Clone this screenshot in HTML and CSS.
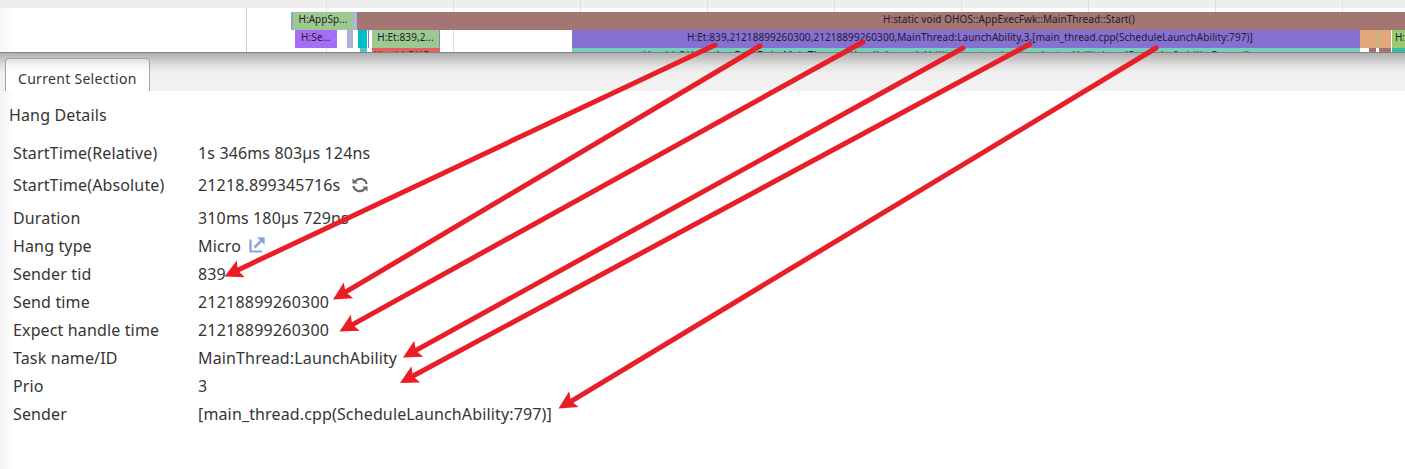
FILE: index.html
```html
<!DOCTYPE html>
<html lang="en">
<head>
<meta charset="utf-8">
<title>Hang Details</title>
<link rel="stylesheet" href="styles.css">
</head>
<body>
<div class="app">
  <div class="ruler"></div>
  <div class="tracks">
    <div class="track-name"></div>
    <div class="lanes">
      <div class="lane">
        <span class="slice s-edge"></span><span class="slice s-app">H:AppSp...</span><span class="slice s-gap"></span><span class="slice s-start">H:static void OHOS::AppExecFwk::MainThread::Start()</span>
      </div>
      <div class="lane">
        <span class="slice s-se">H:Se...</span><span class="slice s-lav"></span><span class="slice s-cyan"></span><span class="slice s-hair"></span><span class="slice s-et">H:Et:839,2...</span><span class="slice s-hair2"></span><span class="slice s-launch">H:Et:839,21218899260300,21218899260300,MainThread:LaunchAbility,3,[main_thread.cpp(ScheduleLaunchAbility:797)]</span><span class="slice s-orange1"></span><span class="slice s-olive"></span><span class="slice s-orange2"></span><span class="slice s-h">H:</span>
      </div>
      <div class="lane">
        <span class="slice s-teal1"></span><span class="slice s-red">H:void OHO...</span><span class="slice s-mint">H:void OHOS::AppExecFwk::MainThread::HandleLaunchAbility(const std::shared_ptr&lt;AbilityLocalRecord&gt; &amp;abilityRecord)</span><span class="slice s-brown1"></span><span class="slice s-brown2"></span><span class="slice s-teal2"></span>
      </div>
    </div>
  </div>
  <div class="panel">
    <div class="tabbar"><div class="tab">Current Selection</div></div>
    <div class="details">
      <div class="heading">Hang Details</div>
      <div class="row tall"><span class="key">StartTime(Relative)</span><span class="value">1s 346ms 803µs 124ns</span></div>
      <div class="row tall"><span class="key">StartTime(Absolute)</span><span class="value">21218.899345716s</span>
        <svg class="sync" width="16" height="16" viewBox="0 0 16 16"><g fill="none" stroke="#666" stroke-width="2.2"><path d="M14.600 7A6.400 6.400 0 0 0 3.300 4.300"/><path d="M1.400 9A6.400 6.400 0 0 0 12.700 11.700"/></g><path d="M.5 1.500V6.600H5.800ZM15.500 14.500V9.400H10.200Z" fill="#666"/></svg></div>
      <div class="row duration"><span class="key">Duration</span><span class="value">310ms 180µs 729ns</span></div>
      <div class="row"><span class="key">Hang type</span><span class="value">Micro</span>
        <svg class="jump" width="16" height="16" viewBox="0 0 16 16"><g fill="none" stroke="#86a5e0" stroke-width="2.2"><path d="M1.500 2.500V14.500H13"/><path d="M5.500 10.500L12.500 3.500" stroke-width="2.600"/></g><path d="M8 .3H15.700V8Z" fill="#86a5e0"/></svg></div>
      <div class="row"><span class="key">Sender tid</span><span class="value">839</span></div>
      <div class="row"><span class="key">Send time</span><span class="value number">21218899260300</span></div>
      <div class="row"><span class="key">Expect handle time</span><span class="value number">21218899260300</span></div>
      <div class="row"><span class="key">Task name/ID</span><span class="value">MainThread:LaunchAbility</span></div>
      <div class="row"><span class="key">Prio</span><span class="value">3</span></div>
      <div class="row"><span class="key">Sender</span><span class="value">[main_thread.cpp(ScheduleLaunchAbility:797)]</span></div>
    </div>
  </div>
  <svg class="arrows" width="1405" height="469" viewBox="0 0 1405 469">
    <defs><marker id="head" markerUnits="userSpaceOnUse" markerWidth="20" markerHeight="20" refX="19" refY="10" orient="auto"><path d="M19 10L1 .8L4.500 10L1 19.200Z" fill="#ec1c24"/></marker></defs>
    <g class="shafts">
      <path d="M715 45L238 269.900"/><path d="M715 45L224.500 276.500" class="tip"/>
      <path d="M760 46L345 292.400"/><path d="M760 46L333 299.500" class="tip"/>
      <path d="M863 42L352 324.900"/><path d="M863 42L339.500 331.500" class="tip"/>
      <path d="M963 48L415 350.900"/><path d="M963 48L403 357.500" class="tip"/>
      <path d="M1030 44L412 376.500"/><path d="M1030 44L400 383" class="tip"/>
      <path d="M1156 48L571 401.300"/><path d="M1156 48L558.500 408.500" class="tip"/>
    </g>
  </svg>
</div>
</body>
</html>
```
FILE: styles.css
```css
* { box-sizing: border-box; }
body { margin: 0; background: #fff; font-family: "Noto Sans", "Open Sans", sans-serif; color: #353535; }
.app { position: relative; width: 1405px; height: 469px; overflow: hidden; }
.ruler, .lanes {
  background-image: repeating-linear-gradient(90deg, #dfdfdf 0, #dfdfdf 1px, transparent 1px, transparent 127px);
  background-repeat: no-repeat;
}
.ruler { height: 8px; background-color: #eeeeee; background-position: 326px 0; }
.tracks { display: flex; height: 44px; overflow: hidden; }
.track-name { width: 247px; border-right: 1px solid #ccc; background: linear-gradient(90deg, #f7f7f7, #fff 16px); }
.lanes { flex: 1; padding-top: 4px; background-position: 79px 0; }
.lane { display: flex; height: 18px; }
.slice { flex: none; height: 18px; display: flex; justify-content: center; font-size: 10px; line-height: 15px; letter-spacing: 0.075px; color: #231a2c; white-space: nowrap; }
.s-edge { margin-left: 44px; width: 2px; background: #8fa9cc; }
.s-app { width: 60px; background: #9bc98f; }
.s-gap { width: 4px; background: #a9b8dc; }
.s-start { width: 1048px; background: #a37573; justify-content: flex-start; padding-left: 526px; }
.s-se { margin-left: 48px; width: 42px; background: #a66ef5; }
.s-lav { margin-left: 10px; width: 6px; background: #adb1dc; }
.s-cyan { margin-left: 5px; width: 9px; background: #00bdcb; }
.s-hair { margin-left: 1px; width: 1px; background: #8f6fe0; }
.s-et { margin-left: 3px; width: 67px; background: #9bc98f; }
.s-hair2 { width: 1px; background: #8f80d0; }
.s-launch { margin-left: 132px; width: 788px; background: #8670d2; justify-content: flex-start; padding-left: 115px; }
.s-orange1 { width: 16px; background: #e3a77c; }
.s-olive { width: 3px; background: #c0b583; }
.s-orange2 { width: 12px; background: #e3a77c; }
.s-h { margin-left: 1px; width: 13px; background: #9bc96f; justify-content: flex-start; padding-left: 3px; letter-spacing: -0.3px; }
.s-teal1 { margin-left: 113px; width: 7px; background: #4dcabf; }
.s-red { margin-left: 5px; width: 68px; background: #e0625f; }
.s-mint { margin-left: 132px; width: 788px; background: #76cfbb; justify-content: flex-start; padding-left: 71px; letter-spacing: 0.4px; }
.s-brown1 { margin-left: 9px; width: 7px; background: #a5736f; }
.s-brown2 { margin-left: 3px; width: 12px; background: #a5736f; }
.s-teal2 { margin-left: 1px; width: 13px; background: #35bfa3; }
.panel { height: 417px; border-top: 1px solid #808080; background: linear-gradient(90deg, #f5f5f5, #fff 16px); }
.tabbar { height: 38px; padding: 5px 0 0 5px; background: linear-gradient(180deg, #b0b0b0, #c6c6c6 6px, #e2e2e2 13px, #f1f1f1 21px); }
.tab { width: 145px; height: 33px; border: 1px solid #a2a2a2; border-bottom: 0; border-radius: 4px 4px 0 0; background: linear-gradient(180deg, #dedede, #f4f4f4 6px, #fff 14px); padding-left: 12px; font-size: 14px; letter-spacing: 0.3px; line-height: 40px; white-space: nowrap; }
.details { font-size: 16px; letter-spacing: 0.14px; }
.heading { height: 46px; padding-left: 9px; line-height: 48px; }
.row { display: flex; align-items: center; height: 28px; padding-left: 13px; white-space: nowrap; }
.row.tall { height: 32.300px; }
.row.duration { height: 32px; margin-bottom: -2px; }
.key { width: 185px; }
.number { letter-spacing: 0.22px; }
.sync { margin-left: 12px; }
.jump { margin-left: 8px; margin-bottom: 2px; }
.arrows { position: absolute; left: 0; top: 0; }
.shafts { fill: none; stroke: #e81f28; stroke-width: 5; stroke-linecap: round; }
.tip { stroke: none; marker-end: url(#head); }
```
